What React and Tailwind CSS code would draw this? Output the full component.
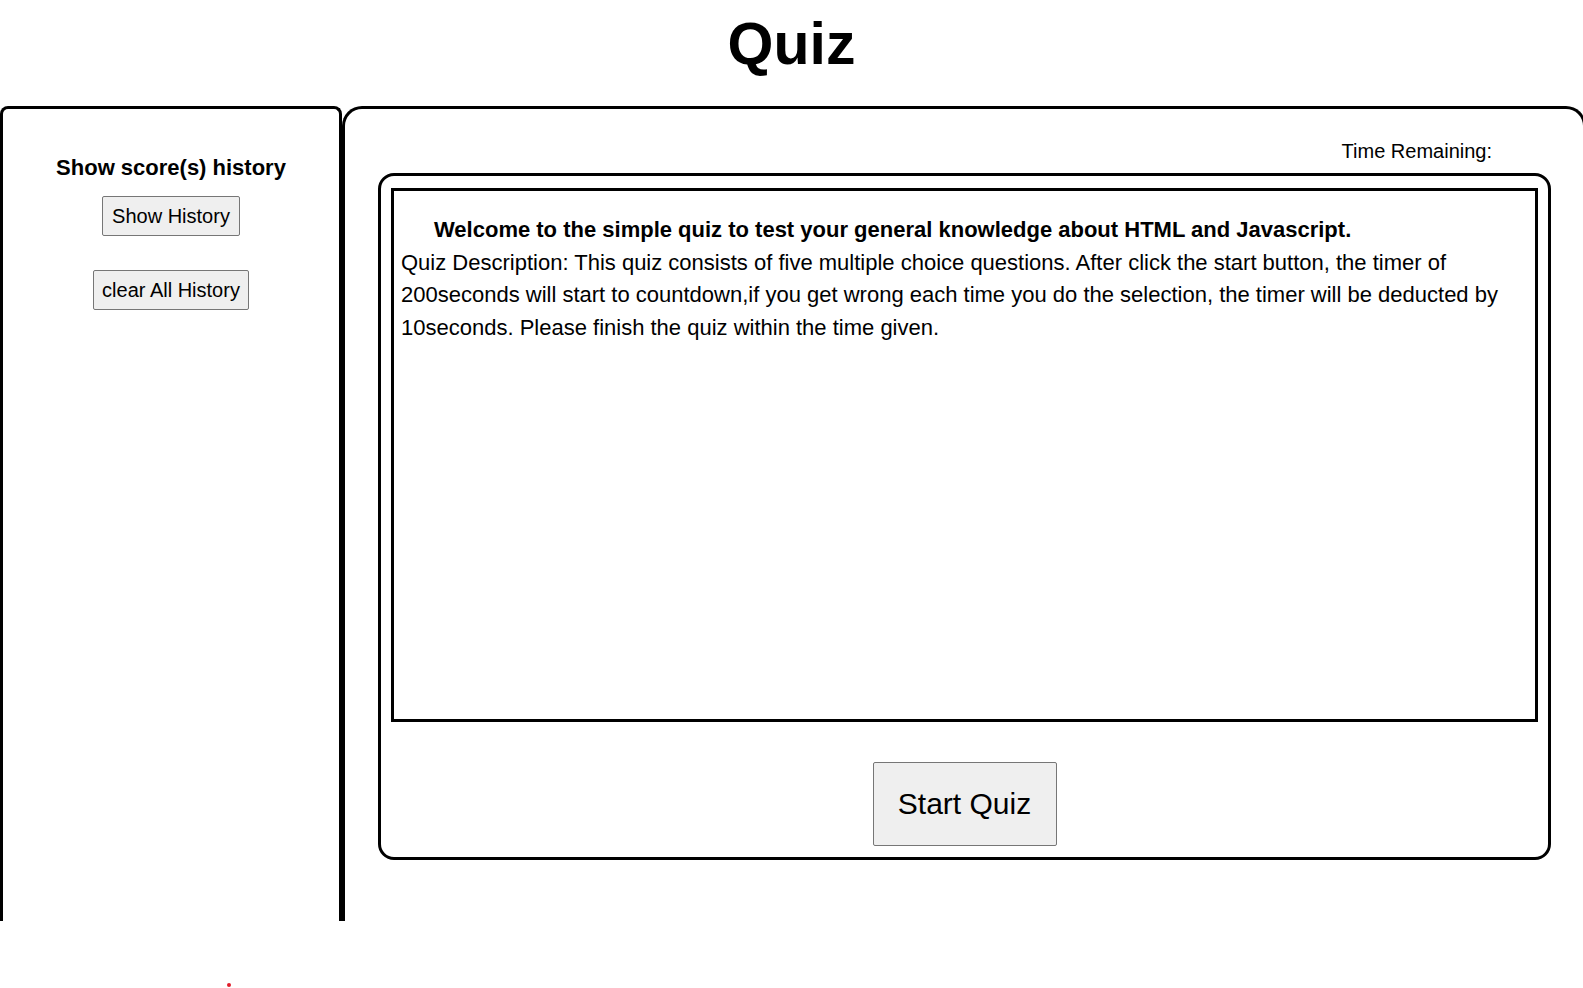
export default function App() {
    return (
        <div className="relative w-[1583px] h-[988px] overflow-hidden bg-white text-black font-[family-name:'Liberation_Sans',Arial,sans-serif]">
            <div className="h-[106px] pt-[11px]">
                <h1 className="text-center text-[59px] font-bold leading-[66px]">Quiz</h1>
            </div>

            <div className="flex h-[815px]">
                {/* score history */}
                <div className="w-[342px] shrink-0 border-[3px] border-b-0 border-black rounded-t-[8px] flex flex-col items-center pt-[46px]">
                    <h3 className="text-[22px] font-bold leading-[25px]">Show score(s) history</h3>
                    <button className="mt-[16px] h-[40px] px-[9px] text-[20px] leading-[23px] bg-[#efefef] border border-[#767676] rounded-[2px]">
                        Show History
                    </button>
                    <button className="mt-[34px] h-[40px] px-[8px] text-[20px] leading-[23px] bg-[#efefef] border border-[#767676] rounded-[2px]">
                        clear All History
                    </button>
                </div>

                {/* quiz area */}
                <div className="w-[1244px] shrink-0 border-[3px] border-b-0 border-black rounded-t-[20px]">
                    <div className="flex justify-end pt-[31px] pr-[91px]">
                        <span className="text-[20px] leading-[23px]">Time Remaining:</span>
                    </div>
                    <div className="mt-[10px] ml-[33px] w-[1173px] h-[687px] border-[3px] border-black rounded-[16px] px-[10px] pt-[12px] flex flex-col">
                        <div className="h-[534px] border-[3px] border-black px-[7px] pt-[23px] text-[22px] leading-[32.5px]">
                            <p className="pl-[33px] font-bold">Welcome to the simple quiz to test your general knowledge about HTML and Javascript.</p>
                            <p>
                                Quiz Description: This quiz consists of five multiple choice questions. After click the start button, the timer of 200seconds will start to countdown,if you get wrong each time you do the selection, the timer will be deducted by 10seconds. Please finish the quiz within the time given.
                            </p>
                        </div>
                        <div className="flex justify-center mt-[40px]">
                            <button className="w-[184px] h-[84px] text-[30px] leading-[34px] bg-[#efefef] border border-[#767676] rounded-[2px]">
                                Start Quiz
                            </button>
                        </div>
                    </div>
                </div>
            </div>

            <div className="ml-[227px] mt-[62px] w-[4px] h-[4px] rounded-full bg-[#e11d2a]"></div>
        </div>
    );
}
